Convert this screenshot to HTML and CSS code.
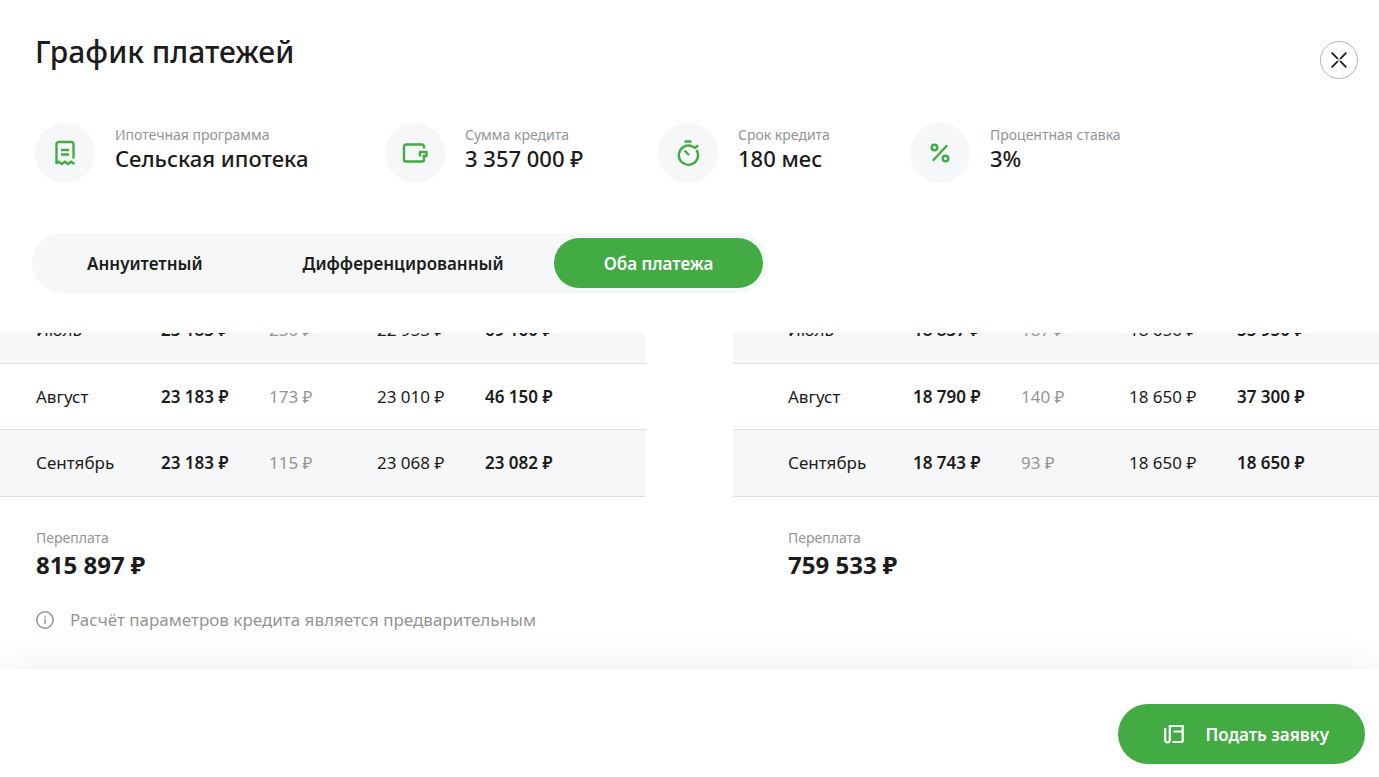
FILE: index.html
```html
<!DOCTYPE html>
<html lang="ru">
<head>
<meta charset="utf-8">
<meta name="viewport" content="width=device-width, initial-scale=1">
<title>График платежей</title>
<link rel="stylesheet" href="styles.css">
</head>
<body>
<main class="dialog">
  <header class="head">
    <h1 class="title">График платежей</h1>
    <button class="close" type="button" aria-label="Закрыть">
      <svg width="16" height="16" viewBox="0 0 16 16" fill="none" stroke="currentColor" stroke-width="1.8" stroke-linecap="round"><path d="M1.200 1.200 6.300 6.300M14.800 1.200 9.700 6.300M1.200 14.800 6.300 9.700M14.800 14.800 9.700 9.700"/><path d="M6.800 6.800 9.200 9.200M9.200 6.800 6.800 9.200" stroke-width="1.200" opacity=".3"/></svg>
    </button>
  </header>

  <section class="facts">
    <div class="fact fact-program">
      <span class="fact-icon">
        <svg width="24" height="28" viewBox="0 0 24 28" fill="none" stroke="currentColor" stroke-width="2.400"><path d="M20.500 19.500V5a2 2 0 0 0-2-2h-13a2 2 0 0 0-2 2V25"/><path d="M3.500 24.500l2.300-1.800 3 2.300 3.200-2.300 3.200 2.300 3-2.300 3.300 2.300M8 11h8M8 15.500h8"/></svg>
      </span>
      <div><p class="label">Ипотечная программа</p><p class="value">Сельская ипотека</p></div>
    </div>
    <div class="fact fact-sum">
      <span class="fact-icon">
        <svg width="28" height="24" viewBox="0 0 28 24" fill="none" stroke="currentColor" stroke-width="2.400" stroke-linejoin="round"><path d="M23 7.500V5.500a2 2 0 0 0-2-2H5a2 2 0 0 0-2 2v13a2 2 0 0 0 2 2h16a2 2 0 0 0 2-2V16"/><path d="M19 15.500v-4.500h6.500v4h-4"/></svg>
      </span>
      <div><p class="label">Сумма кредита</p><p class="value">3 357 000 ₽</p></div>
    </div>
    <div class="fact fact-term">
      <span class="fact-icon">
        <svg width="24" height="28" viewBox="0 0 24 28" fill="none" stroke="currentColor" stroke-width="2.400"><path d="M16.500 7.500A9.600 9.600 0 1 0 20.500 11M8.500 2.500h7M8.500 11.500l4.500 4.500M16.500 7.500l2.500 1.300 3.200-2.300"/></svg>
      </span>
      <div><p class="label">Срок кредита</p><p class="value">180 мес</p></div>
    </div>
    <div class="fact">
      <span class="fact-icon">
        <svg width="20" height="20" viewBox="0 0 20 20" fill="none" stroke="currentColor" stroke-width="2.400" stroke-linecap="round"><circle cx="4.500" cy="4.500" r="2.800"/><circle cx="15.500" cy="15.500" r="2.800"/><path d="M16.500 3 3.500 17"/></svg>
      </span>
      <div><p class="label">Процентная ставка</p><p class="value">3%</p></div>
    </div>
  </section>

  <nav class="tabs">
    <button class="tab" type="button">Аннуитетный</button>
    <button class="tab" type="button">Дифференцированный</button>
    <button class="tab tab-active" type="button">Оба платежа</button>
  </nav>

  <section class="schedule">
    <div class="plans">
      <div class="plan">
        <table class="payments">
          <colgroup><col class="c-month"><col class="c-sum"><col class="c-sum"><col class="c-sum"><col></colgroup>
          <tbody>
            <tr class="shaded"><td>Июль</td><td class="strong">23 183 ₽</td><td class="muted">230 ₽</td><td>22 953 ₽</td><td class="strong">69 160 ₽</td></tr>
            <tr><td>Август</td><td class="strong">23 183 ₽</td><td class="muted">173 ₽</td><td>23 010 ₽</td><td class="strong">46 150 ₽</td></tr>
            <tr class="shaded"><td>Сентябрь</td><td class="strong">23 183 ₽</td><td class="muted">115 ₽</td><td>23 068 ₽</td><td class="strong">23 082 ₽</td></tr>
          </tbody>
        </table>
        <div class="overpay"><p class="label">Переплата</p><p class="total">815 897 ₽</p></div>
      </div>
      <div class="plan plan-second">
        <table class="payments">
          <colgroup><col class="c-month"><col class="c-sum"><col class="c-sum"><col class="c-sum"><col></colgroup>
          <tbody>
            <tr class="shaded"><td>Июль</td><td class="strong">18 837 ₽</td><td class="muted">187 ₽</td><td>18 650 ₽</td><td class="strong">55 950 ₽</td></tr>
            <tr><td>Август</td><td class="strong">18 790 ₽</td><td class="muted">140 ₽</td><td>18 650 ₽</td><td class="strong">37 300 ₽</td></tr>
            <tr class="shaded"><td>Сентябрь</td><td class="strong">18 743 ₽</td><td class="muted">93 ₽</td><td>18 650 ₽</td><td class="strong">18 650 ₽</td></tr>
          </tbody>
        </table>
        <div class="overpay"><p class="label">Переплата</p><p class="total">759 533 ₽</p></div>
      </div>
    </div>
    <p class="note">
      <svg width="18" height="18" viewBox="0 0 18 18" fill="none" stroke="currentColor" stroke-width="1.500"><circle cx="9" cy="9" r="8.200"/><path d="M9 7.800v5.200M9 4.800v1.600"/></svg>
      Расчёт параметров кредита является предварительным
    </p>
  </section>

  <footer class="foot">
    <button class="apply" type="button">
      <svg width="20" height="20" viewBox="0 0 20 20" fill="none" stroke="currentColor" stroke-width="2.200"><path d="M1.200 4v12a2.300 2.300 0 0 0 4.600 0V2h12.900v14.500a1.500 1.500 0 0 1-1.500 1.500H8.500M18.500 7.500H9.500"/></svg>
      Подать заявку
    </button>
  </footer>
</main>
</body>
</html>
```
FILE: styles.css
```css
* { box-sizing: border-box; }

body {
  margin: 0;
  background: #fff;
  color: #1c1c1c;
  font-family: "Noto Sans", "Open Sans", sans-serif;
  font-size: 17px;
}

h1, p { margin: 0; }
button { border: 0; font: inherit; cursor: pointer; }
svg { flex: none; }

.dialog {
  display: flex;
  flex-direction: column;
  height: 100vh;
}

.head {
  display: flex;
  justify-content: space-between;
  padding: 32px 21px 0 35px;
}

.title {
  font-size: 30px;
  line-height: 40px;
  font-weight: 500;
}

.close {
  display: flex;
  align-items: center;
  justify-content: center;
  width: 38px;
  height: 38px;
  margin-top: 9px;
  padding: 0;
  border: 1px solid #b4b4b4;
  border-radius: 50%;
  background: #fff;
  color: #1c1c1c;
}

.facts {
  display: flex;
  gap: 75px;
  margin-top: 44px;
  padding: 0 35px;
}

.fact {
  display: flex;
  gap: 20px;
  white-space: nowrap;
}

.fact-program { width: 275px; }
.fact-sum { width: 198px; }
.fact-term { width: 177px; }

.fact-icon {
  display: flex;
  flex: none;
  align-items: center;
  justify-content: center;
  width: 60px;
  height: 60px;
  border-radius: 50%;
  background: #f5f7f9;
  color: #43ab43;
}

.label {
  color: #949494;
  font-size: 14px;
  line-height: 24px;
}

.value {
  font-size: 22px;
  line-height: 22px;
  font-weight: 500;
}

.tabs {
  display: flex;
  align-self: flex-start;
  margin: 50px 32px 40px;
  padding: 5px;
  border-radius: 30px;
  background: #f5f7f9;
}

.tab {
  height: 50px;
  padding: 0 50px;
  border-radius: 25px;
  background: transparent;
  color: #1c1c1c;
  font-weight: 600;
}

.tab-active {
  background: #43ab43;
  color: #fff;
}

.schedule {
  display: flex;
  flex: 1;
  flex-direction: column;
  justify-content: flex-end;
  min-height: 0;
  overflow: hidden;
  padding-bottom: 37px;
}

.plans {
  display: grid;
  grid-template-columns: 1fr 1fr;
  gap: 87px;
}

.payments {
  width: 100%;
  table-layout: fixed;
  border-spacing: 0;
}

.c-month { width: 161px; }
.c-sum { width: 108px; }
.plan-second .c-month { width: 180px; }

.payments td {
  height: 66px;
  padding: 0 0 1px;
  border-bottom: 1px solid #dcdfe0;
  white-space: nowrap;
}

.payments .shaded td { height: 67px; }
.payments td:first-child { padding-left: 36px; }
.plan-second .payments td:first-child { padding-left: 55px; }
.shaded { background: #f5f7f9; }
.strong { font-weight: 600; }
.muted { color: #949494; }

.overpay { padding: 29px 36px 0; }
.plan-second .overpay { padding-left: 55px; }

.total {
  font-size: 24px;
  line-height: 30px;
  font-weight: 700;
}

.note {
  display: flex;
  align-items: center;
  gap: 16px;
  margin-top: 28px;
  padding: 0 36px;
  color: #949494;
  line-height: 24px;
}

.foot {
  position: relative;
  display: flex;
  justify-content: flex-end;
  padding: 35px 14px 13px;
  background: #fff;
  box-shadow: 0 0 40px rgba(0, 0, 0, 0.07);
}

.apply {
  display: flex;
  align-items: center;
  gap: 21px;
  height: 60px;
  padding: 0 36px 0 46px;
  border-radius: 30px;
  background: #43ab43;
  color: #fff;
  font-weight: 600;
}
```
